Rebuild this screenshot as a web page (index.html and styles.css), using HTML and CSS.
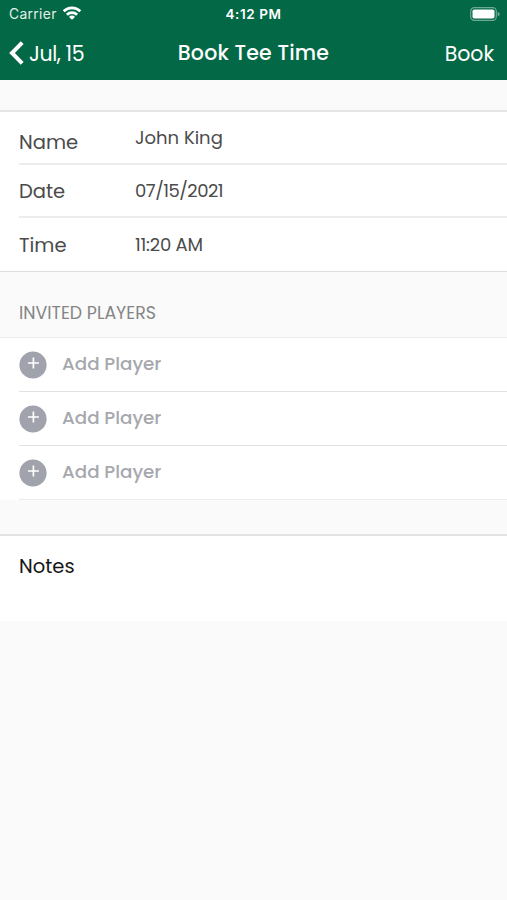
FILE: index.html
```html
<!DOCTYPE html>
<html lang="en">
<head>
    <meta charset="UTF-8">
    <meta name="viewport" content="width=device-width, initial-scale=1.0">
    <title>Book Tee Time</title>
    <link rel="stylesheet" href="styles.css">
</head>
<body>

<header class="header">
    <div class="status-bar">
        <div class="carrier">
            <span>Carrier</span>
            <svg class="wifi" width="20" height="14" viewBox="0 0 20 14" fill="none" stroke="#fff" stroke-width="2.7">
                <path d="M1.7 5.3a11.8 11.8 0 0 1 16.6 0"/>
                <path d="M4.9 8.7a7.3 7.3 0 0 1 10.2 0"/>
                <path d="M10 13.8 7 10.9a4 4 0 0 1 6 0z" fill="#fff" stroke="none"/>
            </svg>
        </div>
        <span class="clock">4:12 PM</span>
        <svg class="battery" width="31" height="14" viewBox="0 0 31 14">
            <rect x="0.7" y="0.7" width="25.6" height="12.6" rx="3.6" fill="none" stroke="#6fa893" stroke-width="1.2"/>
            <rect x="2.5" y="2.5" width="22" height="9" rx="1.8" fill="#fff"/>
            <path d="M27.6 4.7c2.8 1 2.8 3.6 0 4.6z" fill="#6fa893"/>
        </svg>
    </div>
    <div class="nav-bar">
        <a class="back">
            <svg width="15" height="24" viewBox="0 0 15 24" fill="none" stroke="#fff" stroke-width="4">
                <path d="M13.2 1.6 3 12l10.2 10.4"/>
            </svg>
            <span>Jul, 15</span>
        </a>
        <h1>Book Tee Time</h1>
        <a class="book">Book</a>
    </div>
</header>

<main>
    <div class="details">
        <div class="row row-name">
            <span class="label">Name</span>
            <span class="value">John King</span>
        </div>
        <div class="row">
            <span class="label">Date</span>
            <span class="value date">07/15/2021</span>
        </div>
        <div class="row">
            <span class="label">Time</span>
            <span class="value time">11:20 AM</span>
        </div>
    </div>

    <h2>INVITED PLAYERS</h2>

    <div class="players">
        <div class="player">
            <svg width="28" height="28" viewBox="0 0 28 28">
                <circle cx="14" cy="14" r="13.6" fill="#a0a2ac"/>
                <path d="M14.4 6.5v11M8.9 12h11" stroke="#fff" stroke-width="1.7"/>
            </svg>
            <span>Add Player</span>
        </div>
        <div class="player">
            <svg width="28" height="28" viewBox="0 0 28 28">
                <circle cx="14" cy="14" r="13.6" fill="#a0a2ac"/>
                <path d="M14.4 6.5v11M8.9 12h11" stroke="#fff" stroke-width="1.7"/>
            </svg>
            <span>Add Player</span>
        </div>
        <div class="player">
            <svg width="28" height="28" viewBox="0 0 28 28">
                <circle cx="14" cy="14" r="13.6" fill="#a0a2ac"/>
                <path d="M14.4 6.5v11M8.9 12h11" stroke="#fff" stroke-width="1.7"/>
            </svg>
            <span>Add Player</span>
        </div>
    </div>

    <div class="notes">Notes</div>
</main>

</body>
</html>
```
FILE: styles.css
```css
* {
    box-sizing: border-box;
}

body {
    margin: 0;
    background-color: #fafafa;
    font-family: Poppins, Inter, sans-serif;
    font-size: 19.5px;
    color: #4b4b4b;
}

.header {
    height: 80px;
    background-color: #036845;
    color: #fff;
}

.status-bar {
    display: grid;
    grid-template-columns: 1fr auto 1fr;
    align-items: center;
    height: 27px;
    padding: 0 6px 0 9px;
    font-family: Inter, sans-serif;
    font-size: 13.5px;
}

.carrier {
    display: flex;
    align-items: center;
    gap: 5px;
    font-size: 13.8px;
    letter-spacing: 0.35px;
    color: #e3f0eb;
}

.wifi {
    margin-bottom: 2px;
}

.clock {
    margin-right: 3px;
    font-weight: 600;
    letter-spacing: 0.6px;
}

.battery {
    justify-self: end;
}

.nav-bar {
    display: grid;
    grid-template-columns: 1fr auto 1fr;
    align-items: center;
    height: 52px;
    padding: 0 9px;
}

.back {
    display: flex;
    align-items: center;
    gap: 5px;
    font-size: 20.5px;
    letter-spacing: -0.4px;
}

h1 {
    margin: 0 0 2px;
    font-size: 20.5px;
    font-weight: 500;
    letter-spacing: 0.2px;
}

.book {
    justify-self: end;
    margin-right: 4px;
    font-size: 20.5px;
}

.details {
    margin-top: 30px;
    padding-left: 19px;
    background-color: #fff;
    border-top: 2px solid #e5e5e5;
    border-bottom: 1px solid #dedede;
}

.row {
    display: flex;
    align-items: center;
    height: 53px;
    border-bottom: 2px solid #ececec;
}

.row:last-child {
    border-bottom: none;
}

.row-name .value {
    padding-bottom: 1px;
}

.label {
    width: 116px;
    padding-top: 2px;
}

.row-name .label {
    padding-top: 9px;
}

.value {
    font-size: 18px;
}

.date {
    letter-spacing: -0.5px;
}

.time {
    letter-spacing: -0.2px;
}

h2 {
    margin: 0;
    height: 65px;
    padding: 30px 19px 0;
    font-size: 17.4px;
    font-weight: 400;
    line-height: 22px;
    color: #858585;
}

.players {
    padding-left: 19px;
    background-color: #fff;
    border-top: 1px solid #ececec;
}

.player {
    display: flex;
    align-items: center;
    gap: 15px;
    height: 54px;
    border-bottom: 1px solid #e2e2e2;
    font-size: 18.3px;
    font-weight: 500;
    color: #a6a8ad;
}

.player span {
    padding-bottom: 2px;
}

.player:last-child {
    border-bottom-color: #ececec;
}

.notes {
    height: 87px;
    margin-top: 34px;
    padding: 19px 19px;
    background-color: #fff;
    border-top: 2px solid #e2e2e2;
    line-height: 23px;
    color: #161616;
}
```
